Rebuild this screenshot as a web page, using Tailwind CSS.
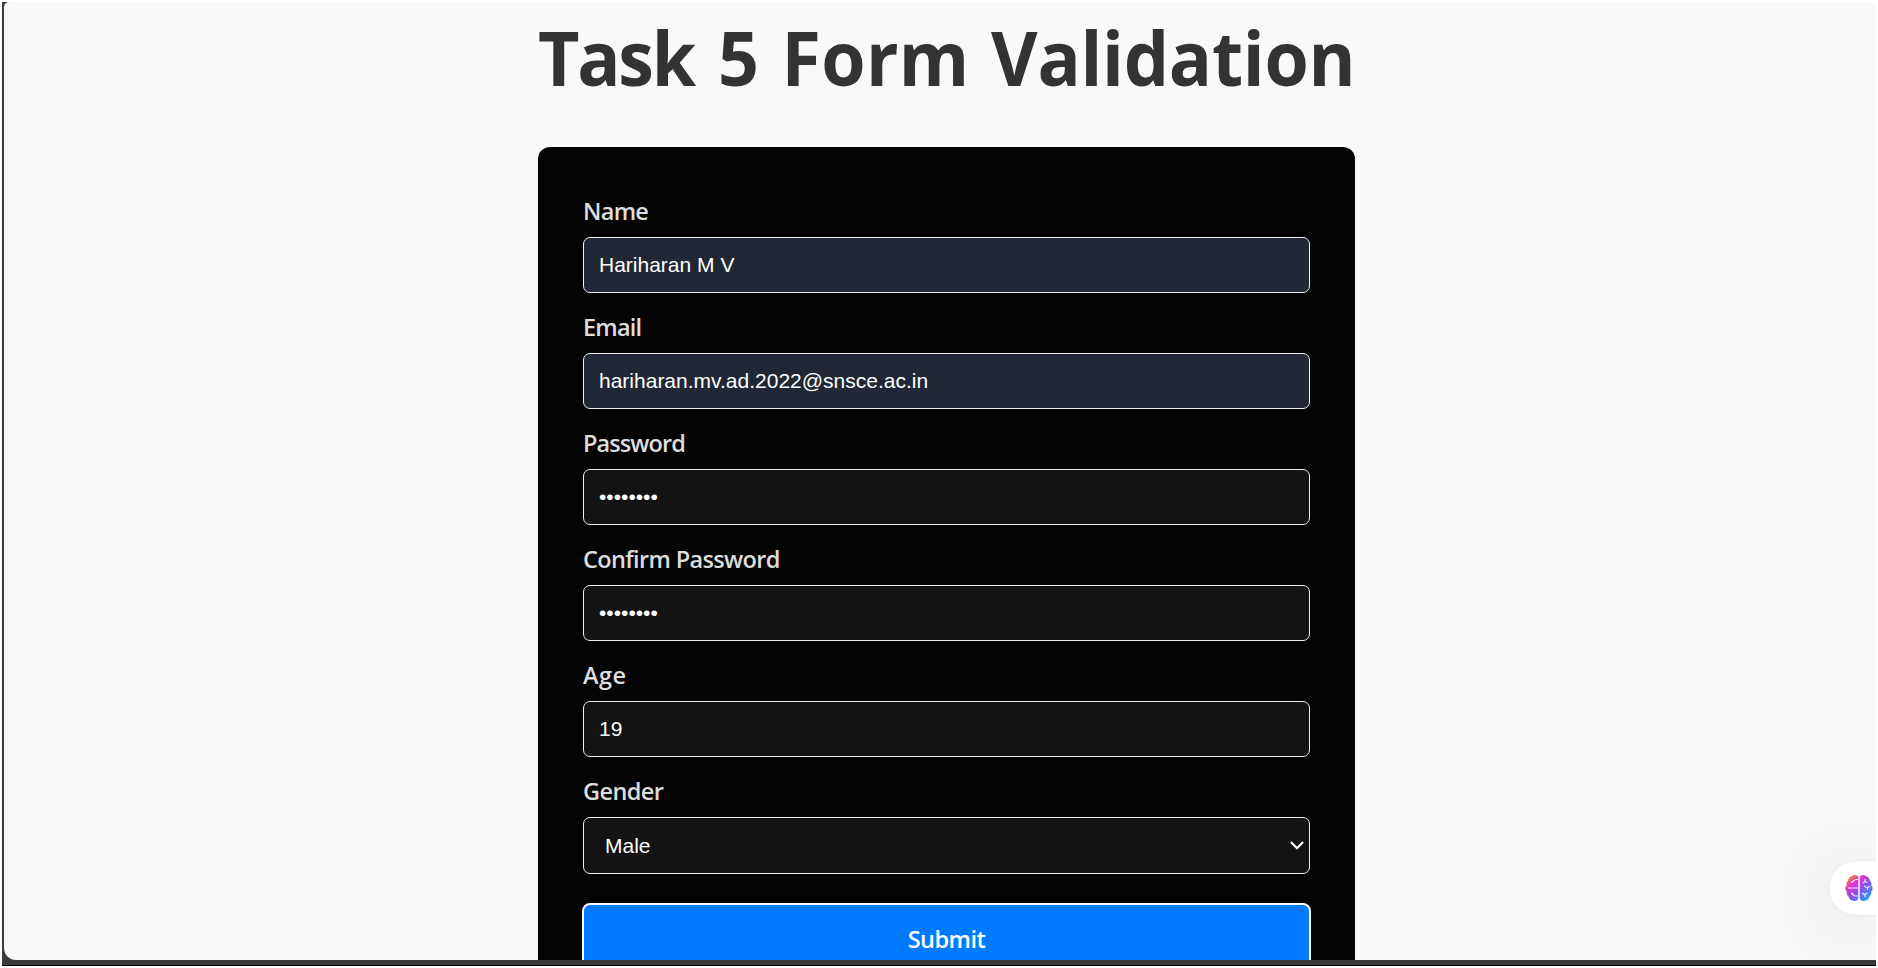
<!DOCTYPE html>
<html lang="en">
<head>
<meta charset="utf-8">
<title>Form Validation</title>
<script src="https://cdn.jsdelivr.net/npm/@tailwindcss/browser@4"></script>
</head>
<body class="h-[968px] w-[1878px] overflow-hidden bg-white pt-[2px] pr-[2px] pl-[2px]">
<div class="h-[964px] overflow-hidden border-b border-black bg-[#3b3b3b] pb-[5px] pl-[2px]">
<main class="relative flex h-[958px] flex-col items-center overflow-hidden rounded-tl-[5px] rounded-bl-[12px] bg-[#f8f9fb]">
  <h1 class="mt-[3px] ml-[13px] h-[104px] w-[817px] origin-left scale-x-[0.943] font-['Open_Sans',sans-serif] text-[76px] leading-[104px] font-bold whitespace-nowrap text-[#333333]"><span class="mr-[6px] tracking-[-2.400px]">Task</span> <span class="mr-[4px]">5</span> <span class="mr-[3px] tracking-[0.400px]">Form</span> <span class="tracking-[-0.250px]">Validation</span></h1>
  <form class="mt-[38px] ml-[13px] h-[900px] w-[817px] shrink-0 rounded-[12px] bg-[#040404] px-[45px] pt-[47px] shadow-[0_8px_12px_rgba(250,249,247,0.9)]">
    <div class="flex h-[116px] flex-col">
      <label class="h-[43px] font-['Open_Sans',sans-serif] text-[23.5px] leading-[34px] font-semibold tracking-[-0.700px] text-[#dddddd]"><span>Name</span></label>
      <div class="flex h-[56px] items-center rounded-[7px] border border-[#eeeeee] bg-[#212734] px-[15px] font-['Liberation_Sans',sans-serif] text-[21px] text-white"><span>Hariharan M V</span></div>
    </div>
    <div class="flex h-[116px] flex-col">
      <label class="h-[43px] font-['Open_Sans',sans-serif] text-[23.5px] leading-[34px] font-semibold tracking-[-0.800px] text-[#dddddd]"><span>Email</span></label>
      <div class="flex h-[56px] items-center rounded-[7px] border border-[#eeeeee] bg-[#212734] px-[15px] font-['Liberation_Sans',sans-serif] text-[21px] text-white"><span>hariharan.mv.ad.2022@snsce.ac.in</span></div>
    </div>
    <div class="flex h-[116px] flex-col">
      <label class="h-[43px] font-['Open_Sans',sans-serif] text-[23.5px] leading-[34px] font-semibold tracking-[-0.900px] text-[#dddddd]"><span>Password</span></label>
      <div class="flex h-[56px] items-center rounded-[7px] border border-[#eeeeee] bg-[#131313] px-[15px] font-['Liberation_Sans',sans-serif] text-[21px] text-white"><span>••••••••</span></div>
    </div>
    <div class="flex h-[116px] flex-col">
      <label class="h-[43px] font-['Open_Sans',sans-serif] text-[23.5px] leading-[34px] font-semibold tracking-[-0.650px] text-[#dddddd]"><span>Confirm Password</span></label>
      <div class="flex h-[56px] items-center rounded-[7px] border border-[#eeeeee] bg-[#131313] px-[15px] font-['Liberation_Sans',sans-serif] text-[21px] text-white"><span>••••••••</span></div>
    </div>
    <div class="flex h-[116px] flex-col">
      <label class="h-[43px] font-['Open_Sans',sans-serif] text-[23.5px] leading-[34px] font-semibold tracking-[0.500px] text-[#dddddd]"><span>Age</span></label>
      <div class="flex h-[56px] items-center rounded-[7px] border border-[#eeeeee] bg-[#131313] px-[15px] font-['Liberation_Sans',sans-serif] text-[21px] text-white"><span>19</span></div>
    </div>
    <div class="flex h-[130px] flex-col">
      <label class="h-[43px] font-['Open_Sans',sans-serif] text-[23.5px] leading-[34px] font-semibold tracking-[-0.600px] text-[#dddddd]"><span>Gender</span></label>
      <div class="flex h-[57px] items-center justify-between rounded-[7px] border border-[#eeeeee] bg-[#131313] pr-[5px] pl-[21px] font-['Liberation_Sans',sans-serif] text-[21px] text-white"><span>Male</span>
        <svg class="h-[9px] w-[14px]" viewBox="0 0 14 9" fill="none" stroke="#fff" stroke-width="2.1"><path d="M.9 1.1 7 7.2l6.1-6.1"/></svg>
      </div>
    </div>
    <button type="button" class="flex h-[64px] w-full justify-center rounded-[7px] bg-[#007bff] pt-[18px] font-['Open_Sans',sans-serif] text-[23.5px] leading-[34px] font-semibold tracking-[-0.500px] text-white outline-2 -outline-offset-1 outline-white"><span>Submit</span></button>
  </form>
  <div class="absolute top-[859px] right-0 flex h-[54px] w-[47px] items-center rounded-l-full bg-white pl-[16px] shadow-[0_8px_70px_rgba(0,0,0,0.13),0_0_2px_rgba(0,0,0,0.12)]">
    <svg class="h-[28px] w-[28px] shrink-0" viewBox="0 0 28 28" fill="none">
      <defs><linearGradient id="g" x1="4" y1="3" x2="24" y2="26" gradientUnits="userSpaceOnUse"><stop stop-color="#f7931e"/><stop offset=".22" stop-color="#f02fc2"/><stop offset=".55" stop-color="#8a50ee"/><stop offset="1" stop-color="#1ea8ff"/></linearGradient></defs>
      <path fill="url(#g)" d="M13.300 3.200C12.600 1 9 .4 7.200 2 5 2.600 3 4.500 3 7 1.500 8 1.200 10 1.800 11.500-.2 13-.2 16 1.800 17.500 1.500 20 2.300 21.500 3.500 22.500 4 25 6 26.800 8.500 26.800c2.500.8 4.800-1 4.800-3zM14.700 3.200c.7-2.200 4.300-2.800 6.100-1.200C23 2.600 25 4.500 25 7c1.500 1 1.800 3 1.200 4.500 2 1.500 2 4.500 0 6 .3 2.500-.5 4-1.700 5-.5 2.500-2.500 4.300-5 4.300-2.500.8-4.800-1-4.800-3z"/>
      <path stroke="#fff" stroke-opacity=".85" stroke-width="1.200" d="M13 5.500H10.500L7.500 7.800M13 14H4.500M13 22H9.500L7 19.500M18 9l2-1.500 2.500 1M20 7.500V5M19 12l3.500 1.800L25 12M22.500 13.800V16M17 19l2.800 1.500 2.700-1.500M19.800 20.500V23"/>
      <g fill="#fff"><circle cx="7" cy="8" r="1"/><circle cx="4.500" cy="14" r="1"/><circle cx="7" cy="19.500" r="1"/></g>
    </svg>
  </div>
</main>
</div>
</body>
</html>
